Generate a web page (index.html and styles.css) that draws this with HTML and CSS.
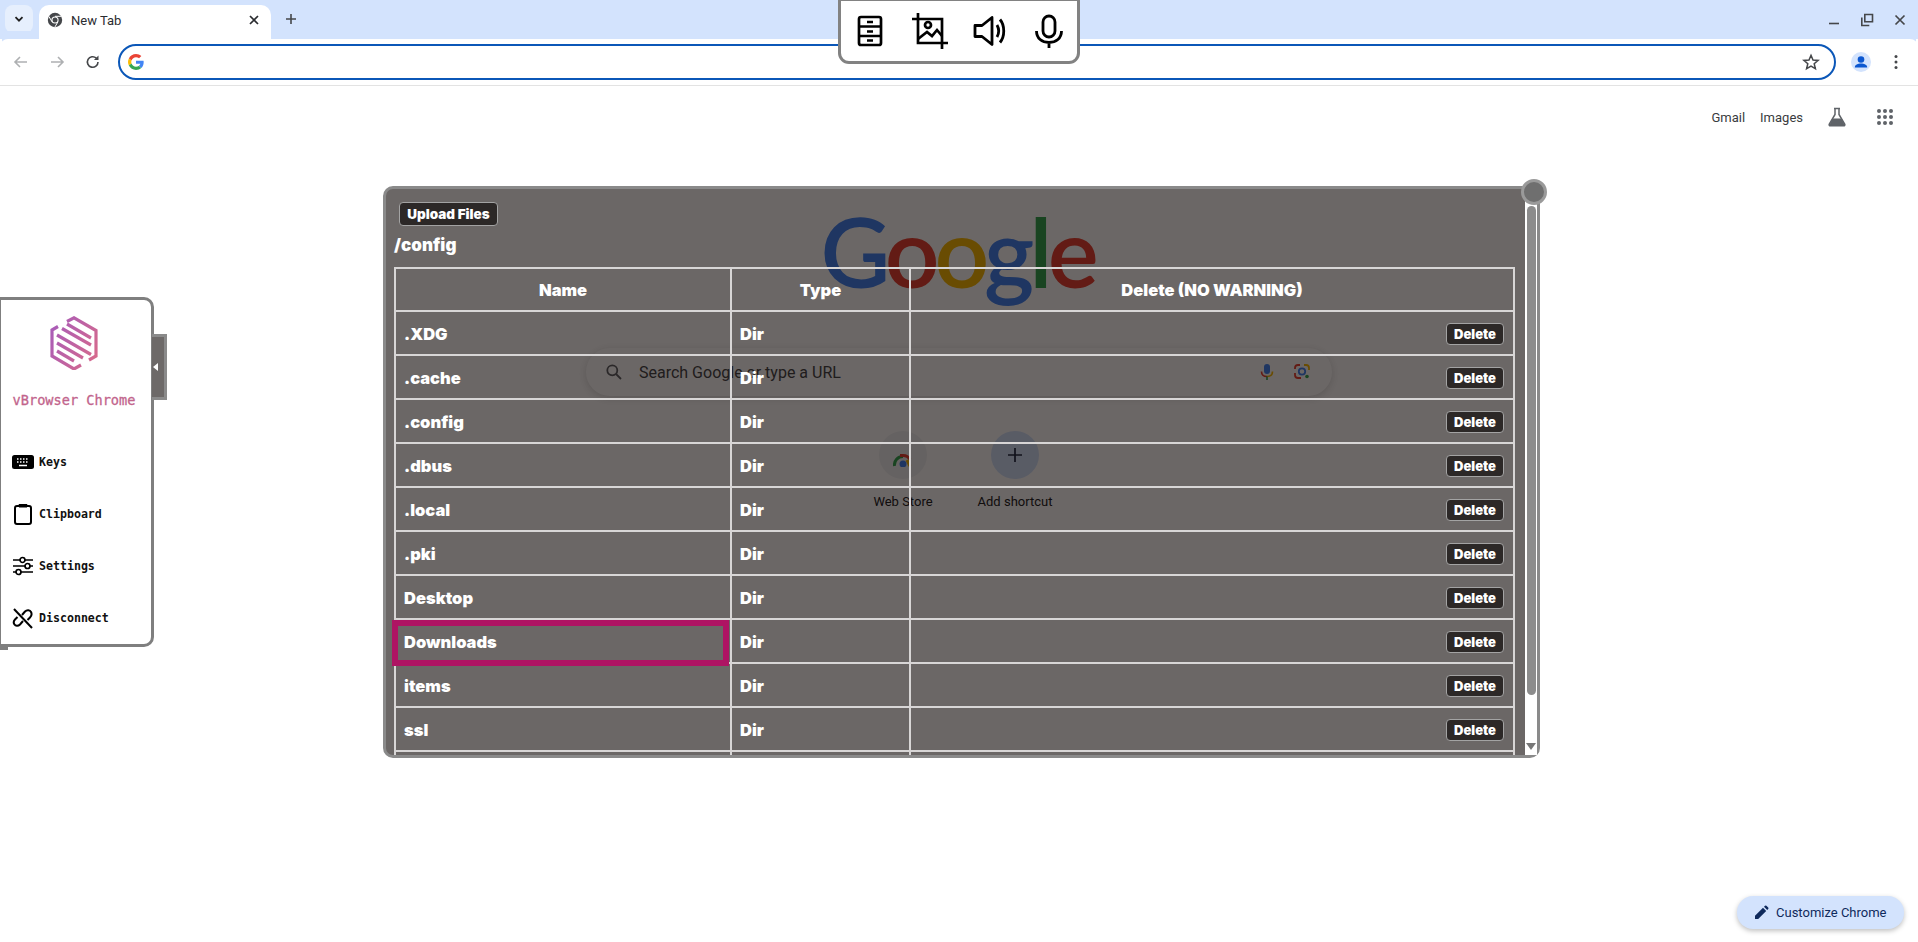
FILE: index.html
```html
<!DOCTYPE html>
<html lang="en">
<head>
<meta charset="utf-8">
<title>vBrowser Chrome</title>
<link rel="stylesheet" href="styles.css">
</head>
<body>
<div class="browser">
  <div class="tabstrip">
    <button class="tab-search"><svg width="12" height="12" viewBox="0 0 12 12"><path d="M2.5 4.2 6 7.7l3.5-3.5" fill="none" stroke="#1f1f1f" stroke-width="1.8"/></svg></button>
    <div class="tab">
      <svg class="tab-favicon" width="16" height="16" viewBox="0 0 16 16"><circle cx="8" cy="8" r="7.2" fill="#45474a"/><circle cx="8" cy="8" r="3.6" fill="#fff"/><circle cx="8" cy="8" r="2.5" fill="#45474a"/><path d="M8 4.3h6.4M5 9.8 1.9 4.4M10.9 9.9 7.8 15.2" stroke="#fff" stroke-width="1"/></svg>
      <span class="tab-title">New Tab</span>
      <svg class="tab-close" width="12" height="12" viewBox="0 0 12 12"><path d="M2 2l8 8M10 2l-8 8" stroke="#2a2c30" stroke-width="1.7"/></svg>
    </div>
    <svg class="new-tab" width="14" height="14" viewBox="0 0 14 14"><path d="M7 2v10M2 7h10" stroke="#45474a" stroke-width="1.6"/></svg>
    <div class="window-buttons">
      <svg width="14" height="14" viewBox="0 0 14 14"><path d="M2 10.5h10" stroke="#45474a" stroke-width="1.6"/></svg>
      <svg width="14" height="14" viewBox="0 0 14 14"><path d="M4.8 1.5h7.7v7.2H4.8zM1.8 4.5v8h7.5" fill="none" stroke="#45474a" stroke-width="1.6"/></svg>
      <svg width="14" height="14" viewBox="0 0 14 14"><path d="M2.5 2.5l9 9M11.500 2.500l-9 9" stroke="#45474a" stroke-width="1.7"/></svg>
    </div>
  </div>
  <div class="toolbar">
    <svg class="tool-icon" width="20" height="20" viewBox="0 0 20 20"><path d="M16 10H4M9 5l-5 5 5 5" fill="none" stroke="#aeb0b2" stroke-width="1.6"/></svg>
    <svg class="tool-icon" width="20" height="20" viewBox="0 0 20 20"><path d="M4 10h12M11 5l5 5-5 5" fill="none" stroke="#aeb0b2" stroke-width="1.6"/></svg>
    <svg class="tool-icon" width="20" height="20" viewBox="0 0 20 20"><path d="M15 10a5.300 5.300 0 1 1-1.700-3.900" fill="none" stroke="#45474a" stroke-width="1.600"/><path d="M15.500 3.500v4.600h-4.600z" fill="#45474a"/></svg>
    <div class="omnibox">
      <svg width="16" height="16" viewBox="0 0 48 48"><path fill="#ea4335" d="M24 9.500c3.500 0 6.700 1.200 9.200 3.600l6.900-6.900C35.900 2.400 30.500 0 24 0 14.600 0 6.500 5.400 2.600 13.200l8 6.200C12.500 13.700 17.800 9.500 24 9.500z"/><path fill="#4285f4" d="M47 24.500c0-1.600-.1-3.100-.4-4.500H24v9h12.900c-.6 3-2.200 5.500-4.700 7.200l7.700 6c4.500-4.200 7.100-10.300 7.100-17.700z"/><path fill="#fbbc05" d="M10.600 28.600c-.5-1.400-.8-3-.8-4.600s.3-3.200.8-4.600l-8-6.200C.9 16.500 0 20.100 0 24s.9 7.500 2.600 10.800l8-6.200z"/><path fill="#34a853" d="M24 48c6.500 0 11.900-2.100 15.900-5.800l-7.700-6c-2.200 1.500-4.900 2.300-8.200 2.300-6.200 0-11.500-4.200-13.400-9.900l-8 6.200C6.500 42.600 14.600 48 24 48z"/></svg>
      <svg class="star" width="18" height="18" viewBox="0 0 18 18"><path d="M9 2.300l2 4.700 5.100.4-3.900 3.300 1.200 5L9 13.100l-4.400 2.600 1.200-5-3.900-3.300L7 7z" fill="none" stroke="#45474a" stroke-width="1.500"/></svg>
    </div>
    <div class="avatar"><svg width="20" height="20" viewBox="0 0 20 20"><circle cx="10" cy="10" r="10" fill="#d3e3fd"/><circle cx="10" cy="7.500" r="3.300" fill="#0b57d0"/><path d="M3.800 15.500c0-3 3.200-4 6.200-4s6.200 1 6.200 4z" fill="#0b57d0"/></svg></div>
    <svg class="menu-dots" width="16" height="16" viewBox="0 0 16 16"><circle cx="8" cy="2.500" r="1.500" fill="#45474a"/><circle cx="8" cy="8" r="1.500" fill="#45474a"/><circle cx="8" cy="13.500" r="1.500" fill="#45474a"/></svg>
  </div>
  <main class="ntp">
    <header class="ntp-top">
      <a class="ntp-link">Gmail</a>
      <a class="ntp-link">Images</a>
      <svg class="flask" width="20" height="20" viewBox="0 0 20 20"><path d="M7 1.500h6M8 2v5.500L2.300 17c-.5 1 .1 1.800 1.100 1.800h13.200c1 0 1.600-.8 1.100-1.800L12 7.500V2" fill="none" stroke="#5f6368" stroke-width="1.500"/><path d="M5.400 11.500h9.200l3 6.500H2.400z" fill="#5f6368"/></svg>
      <svg class="apps" width="16" height="16" viewBox="0 0 16 16" fill="#5f6368"><circle cx="2" cy="2" r="2"/><circle cx="8" cy="2" r="2"/><circle cx="14" cy="2" r="2"/><circle cx="2" cy="8" r="2"/><circle cx="8" cy="8" r="2"/><circle cx="14" cy="8" r="2"/><circle cx="2" cy="14" r="2"/><circle cx="8" cy="14" r="2"/><circle cx="14" cy="14" r="2"/></svg>
    </header>
    <div class="logo"><span class="g-blue">G</span><span class="g-red">o</span><span class="g-yellow">o</span><span class="g-blue">g</span><span class="g-green">l</span><span class="g-red">e</span></div>
    <div class="searchbox">
      <svg width="20" height="20" viewBox="0 0 20 20"><circle cx="8.300" cy="8.300" r="5" fill="none" stroke="#5f6368" stroke-width="1.800"/><path d="M12 12l5 5" stroke="#5f6368" stroke-width="1.800"/></svg>
      <span class="search-text">Search Google or type a URL</span>
      <svg width="20" height="20" viewBox="0 0 20 20"><rect x="7" y="2" width="6" height="10" rx="3" fill="#4285f4"/><path d="M4.500 9.500c0 3.200 2.400 5 5.500 5" fill="none" stroke="#ea4335" stroke-width="1.600"/><path d="M15.500 9.500c0 3.200-2.400 5-5.500 5" fill="none" stroke="#fbbc05" stroke-width="1.600"/><path d="M10 14.500V18" stroke="#34a853" stroke-width="1.600"/></svg>
      <svg class="lens" width="20" height="20" viewBox="0 0 20 20"><path d="M8 3H6a3 3 0 0 0-3 3v1" fill="none" stroke="#ea4335" stroke-width="1.800"/><path d="M3 11v2a3 3 0 0 0 3 3h3" fill="none" stroke="#ea4335" stroke-width="1.800"/><path d="M12 3h2a3 3 0 0 1 3 3v2" fill="none" stroke="#fbbc05" stroke-width="1.800"/><circle cx="10" cy="9.500" r="3.200" fill="none" stroke="#4285f4" stroke-width="1.800"/><circle cx="15" cy="14.500" r="1.800" fill="#34a853"/></svg>
    </div>
    <div class="shortcuts">
      <div class="shortcut">
        <div class="shortcut-circle store"><svg width="20" height="14" viewBox="0 0 20 14"><path d="M1.500 13A8.500 8.500 0 0 1 10 3.500" fill="none" stroke="#34a853" stroke-width="3"/><path d="M7 2.500h3a8 8 0 0 1 7 4" fill="none" stroke="#ea4335" stroke-width="3"/><path d="M14 7l3 6" fill="none" stroke="#fbbc05" stroke-width="3"/><circle cx="10" cy="11" r="3.500" fill="#4285f4"/></svg></div>
        <span class="shortcut-label">Web Store</span>
      </div>
      <div class="shortcut">
        <div class="shortcut-circle add"><svg width="14" height="14" viewBox="0 0 14 14"><path d="M7 0v14M0 7h14" stroke="#1f2a44" stroke-width="1.700"/></svg></div>
        <span class="shortcut-label">Add shortcut</span>
      </div>
    </div>
    <button class="customize"><svg width="15" height="15" viewBox="0 0 15 15"><path d="M1 14v-3.200l8-8L12.200 6l-8 8zM10 1.800l1-1a1 1 0 0 1 1.400 0l1.800 1.800a1 1 0 0 1 0 1.400l-1 1z" fill="#0f2a5c"/></svg><span>Customize Chrome</span></button>
  </main>
</div>

<div class="stream-bar">
  <svg width="36" height="36" viewBox="0 0 36 36" fill="none" stroke="#000" stroke-width="2.700"><rect x="7" y="4" width="22" height="28" rx="2"/><path d="M7 13.500h22M7 23h22M15 9h6M15 18.500h6M15 27.500h6"/></svg>
  <svg width="38" height="38" viewBox="0 0 38 38" fill="none" stroke="#000" stroke-width="2.700"><path d="M1 7h30v30M7 1v30h30"/><circle cx="17" cy="13" r="3"/><path d="M7 27l9-7 5 4 5-6 5 6"/></svg>
  <svg width="36" height="36" viewBox="0 0 36 36" fill="none" stroke="#000" stroke-width="2.800"><path d="M3 12.500v11h7l10 8v-27l-10 8z" stroke-linejoin="round"/><path d="M25 12c2 3.500 2 8.500 0 12M28 6.500c5 6 5 17 0 23"/></svg>
  <svg width="36" height="36" viewBox="0 0 36 36" fill="none" stroke="#000" stroke-width="2.800"><rect x="12" y="3" width="12" height="21" rx="6"/><path d="M5.500 18c0 7.500 5.500 11.500 12.500 11.500s12.500-4 12.500-11.500M18 29.500V35"/></svg>
</div>

<aside class="sidebar">
  <svg class="side-logo" width="48" height="54" viewBox="0 0 48 54" fill="none" stroke="url(#sideGrad)" stroke-width="3.200">
    <defs><linearGradient id="sideGrad" gradientUnits="userSpaceOnUse" x1="0" y1="14" x2="48" y2="40"><stop offset="0" stop-color="#a95cb8"/><stop offset="1" stop-color="#d66a8c"/></linearGradient></defs>
    <path d="M17 5.500 24 1.800l22 12.700V40l-7 4"/>
    <path d="M8 10.500 2 14v26l22 13 7-4"/>
    <path d="M12 12.500 41 29M7 19 41 38.500M7 27 33 42M7 35l17 10M17 8l24 14"/>
  </svg>
  <div class="side-title">vBrowser Chrome</div>
  <nav class="side-menu">
    <div class="side-item"><svg width="22" height="16" viewBox="0 0 22 16"><rect width="22" height="14" y="1" rx="2.500" fill="#000"/><path d="M5 5h1.500M8 5h1.500M11 5h1.500M14 5h1.500M17 5h0M5 8h1.500M8 8h1.500M11 8h1.500M14 8h1.500M7 11.500h8" stroke="#fff" stroke-width="1.400"/></svg><span>Keys</span></div>
    <div class="side-item"><svg width="22" height="22" viewBox="0 0 22 22" fill="none" stroke="#000" stroke-width="2"><rect x="3" y="3" width="16" height="18" rx="2"/><path d="M7 1.500h8V4H7z" fill="#000" stroke-width="1"/></svg><span>Clipboard</span></div>
    <div class="side-item"><svg width="22" height="20" viewBox="0 0 22 20" fill="none" stroke="#000" stroke-width="1.700"><path d="M1 4h7M13 4h8M1 10h12M18 10h3M1 16h3M9 16h12"/><circle cx="10.500" cy="4" r="2.500"/><circle cx="15.500" cy="10" r="2.500"/><circle cx="6.500" cy="16" r="2.500"/></svg><span>Settings</span></div>
    <div class="side-item"><svg width="22" height="22" viewBox="0 0 22 22" fill="none" stroke="#000" stroke-width="2"><path d="M2 2l18 19"/><path d="M10 8l3-3.500c2-2 5-1.500 6 .5s.5 4-1 5.500l-2.500 2.500M11 14l-3 3.500c-2 2-4.500 1.500-5.500 0s-1-3.500.5-5L5.500 10"/></svg><span>Disconnect</span></div>
  </nav>
  <div class="side-handle"><span class="handle-arrow"></span></div>
</aside>
<div class="side-corner"></div>

<section class="files">
  <div class="files-body">
    <button class="btn upload">Upload Files</button>
    <div class="path">/config</div>
    <table class="file-table">
      <colgroup><col class="col-name"><col class="col-type"><col class="col-del"></colgroup>
      <thead><tr><th>Name</th><th>Type</th><th>Delete (NO WARNING)</th></tr></thead>
      <tbody>
        <tr><td>.XDG</td><td>Dir</td><td class="del"><button class="btn">Delete</button></td></tr>
        <tr><td>.cache</td><td>Dir</td><td class="del"><button class="btn">Delete</button></td></tr>
        <tr><td>.config</td><td>Dir</td><td class="del"><button class="btn">Delete</button></td></tr>
        <tr><td>.dbus</td><td>Dir</td><td class="del"><button class="btn">Delete</button></td></tr>
        <tr><td>.local</td><td>Dir</td><td class="del"><button class="btn">Delete</button></td></tr>
        <tr><td>.pki</td><td>Dir</td><td class="del"><button class="btn">Delete</button></td></tr>
        <tr><td>Desktop</td><td>Dir</td><td class="del"><button class="btn">Delete</button></td></tr>
        <tr><td class="selected">Downloads</td><td>Dir</td><td class="del"><button class="btn">Delete</button></td></tr>
        <tr><td>items</td><td>Dir</td><td class="del"><button class="btn">Delete</button></td></tr>
        <tr><td>ssl</td><td>Dir</td><td class="del"><button class="btn">Delete</button></td></tr>
        <tr><td></td><td></td><td></td></tr>
      </tbody>
    </table>
  </div>
  <div class="scrollbar">
    <div class="scroll-track"><div class="scroll-thumb"></div></div>
    <div class="scroll-arrow"></div>
  </div>
  <div class="files-close"></div>
</section>
</body>
</html>
```

FILE: styles.css
```css
*, *::before, *::after { box-sizing: border-box; }
html, body { margin: 0; height: 100%; overflow: hidden; background: #fff; }
body { font-family: Roboto, "Liberation Sans", sans-serif; color: #1f1f1f; }
button { font: inherit; border: 0; padding: 0; }

.browser { display: flex; flex-direction: column; height: 942px; }

.tabstrip { height: 39px; background: #d3e3fd; display: flex; align-items: flex-end; padding-left: 5px; flex: none; }
.tab-search { width: 28px; height: 28px; margin-bottom: 6px; border-radius: 8px; background: #e6effd; display: flex; align-items: center; justify-content: center; }
.tab { width: 232px; height: 34px; margin-left: 6px; background: #fff; border-radius: 10px 10px 0 0; display: flex; align-items: center; padding: 0 0 4px 8px; position: relative; }
.tab-title { margin-left: 8px; font: 13px "Roboto", sans-serif; color: #2a2c30; flex: 1; }
.tab-close { margin-right: 11px; }
.new-tab { margin: 0 0 13px 13px; }
.window-buttons { margin-left: auto; display: flex; gap: 19px; padding-right: 11px; margin-bottom: 12px; }

.toolbar { height: 47px; flex: none; background: #fff; border-bottom: 1px solid #e3e3e3; border-radius: 8px 8px 0 0; display: flex; align-items: center; padding-left: 11px; box-shadow: 0 -10px 0 -2px #d3e3fd; }
.tool-icon { margin-right: 16px; }
.omnibox { width: 1718px; height: 36px; border: 2px solid #0b57b8; border-radius: 18px; display: flex; align-items: center; justify-content: space-between; padding: 0 14px 0 8px; margin-left: -1px; }
.avatar { margin-left: 15px; width: 20px; height: 20px; }
.menu-dots { margin-left: 17px; }

.ntp { flex: 1; position: relative; display: flex; flex-direction: column; align-items: center; }
.ntp-top { align-self: stretch; display: flex; justify-content: flex-end; align-items: center; height: 62px; padding-right: 25px; }
.ntp-link { font: 13px "Roboto", sans-serif; color: #3a3c40; margin-right: 15px; }
.flask { margin-left: 9px; margin-right: 30px; }
.logo { margin-top: 47px; height: 112px; font: 600 96px/112px "Lato", sans-serif; letter-spacing: -5px; padding-right: 4px; }
.g-blue { color: #4285f4; } .g-red { color: #ea4335; } .g-yellow { color: #fbbc05; } .g-green { color: #34a853; }
.searchbox { width: 746px; height: 48px; margin-top: 41px; border-radius: 24px; background: #fff; box-shadow: 0 2px 8px rgba(0,0,0,.15); display: flex; align-items: center; padding: 0 20px 0 18px; }
.search-text { flex: 1; margin-left: 15px; font-size: 16px; color: #45474a; }
.lens { margin-left: 15px; }
.shortcuts { display: flex; margin-top: 35px; }
.shortcut { width: 112px; display: flex; flex-direction: column; align-items: center; }
.shortcut-circle { width: 48px; height: 48px; border-radius: 50%; display: flex; align-items: center; justify-content: center; }
.store { background: #f1f3f4; padding-top: 10px; }
.add { background: #d3e3fd; }
.shortcut-label { margin-top: 15px; font-size: 13px; color: #202124; }
.customize { position: absolute; right: 14px; bottom: 13px; width: 167px; height: 33px; border-radius: 16px; background: #d3e3fd; box-shadow: 0 2px 5px rgba(0,0,0,.25); display: flex; align-items: center; gap: 7px; padding: 0 0 1px 17px; font-size: 13px; color: #0f2a5c; }

.stream-bar { position: absolute; left: 838px; top: -2px; width: 242px; height: 66px; background: #fff; border: 3px solid #828282; border-radius: 0 0 11px 11px; display: flex; align-items: center; justify-content: center; gap: 23px; z-index: 3; }

.sidebar { position: absolute; left: 0; top: 297px; width: 154px; height: 350px; padding-right: 4px; background: #fff; border: 3px solid #7f7f7f; border-left-width: 1px; border-radius: 0 10px 10px 0; display: flex; flex-direction: column; align-items: center; z-index: 2; }
.side-logo { margin-top: 16px; flex: none; }
.side-title { margin-top: 22px; font: 400 13.600px "DejaVu Sans Mono", monospace; color: #c2648c; white-space: nowrap; -webkit-text-stroke: .3px #c2648c; }
.side-menu { align-self: stretch; margin-top: 43px; padding-left: 11px; display: flex; flex-direction: column; gap: 30px; }
.side-item { height: 22px; display: flex; align-items: center; gap: 5px; font: 700 11.600px "DejaVu Sans Mono", monospace; color: #111; }
.side-handle { position: absolute; left: 151px; top: 34px; width: 15px; height: 66px; background: #6d6968; border: 3px solid #8a8a8a; border-left: 0; display: flex; align-items: center; }
.handle-arrow { width: 0; height: 0; border: 4px solid transparent; border-right: 5px solid #fff; border-left: 0; margin-left: 1px; }
.side-corner { position: absolute; left: 0; top: 646px; width: 8px; height: 4px; background: #7f7f7f; }

.files { position: absolute; left: 383px; top: 186px; width: 1157px; height: 572px; background: rgba(8,2,0,.6); border: 3px solid #8a8a8a; border-radius: 10px; display: flex; z-index: 1; color: #fff; font-family: "Inter", sans-serif; font-weight: 800; }
.files-body { flex: 1; min-width: 0; overflow: hidden; padding: 13px 0 0 8px; border-radius: 6px 0 0 6px; }
.btn { display: inline-block; background: #2c2827; color: #fff; border: 1.500px solid #a3a3a3; border-radius: 4px; font: 900 13px/18px "Inter", sans-serif; padding: 1px 7px; }
.upload { margin-left: 5px; height: 24px; width: 99px; padding: 0; display: block; font-size: 13.500px; }
.path { margin-top: 6px; font-size: 17px; font-weight: 900; line-height: 26px; height: 35px; }
.file-table { width: 1121px; table-layout: fixed; border-collapse: collapse; font-size: 16.500px; }
.col-name { width: 336px; } .col-type { width: 179px; }
.file-table th, .file-table td { border: 2px solid #d8d6d6; height: 44px; padding: 1px 8px 0; font-weight: 900; }
.file-table th { height: 43px; text-align: center; padding: 0 8px; }
.file-table td { text-align: left; }
.file-table .del { text-align: right; padding: 1px 9px 0 0; }
.file-table td.selected { position: relative; }
.selected::after { content: ""; position: absolute; left: -4px; right: 1px; top: 0; height: 46px; border: 6px solid #ae1463; }
.scrollbar { width: 12px; background: #fff; display: flex; flex-direction: column; flex: none; }
.scroll-track { flex: 1; padding-top: 17px; }
.scroll-thumb { height: 489px; width: 9px; margin: 0 auto; background: #8c8c8c; border-radius: 5px; }
.scroll-arrow { width: 0; height: 0; margin: 0 0 5px 1px; border: 5px solid transparent; border-top: 7px solid #777; border-bottom: 0; }
.files-close { position: absolute; right: -10px; top: -10px; width: 26px; height: 26px; border-radius: 50%; background: #6f6f6f; border: 3px solid #9a9a9a; }
```
